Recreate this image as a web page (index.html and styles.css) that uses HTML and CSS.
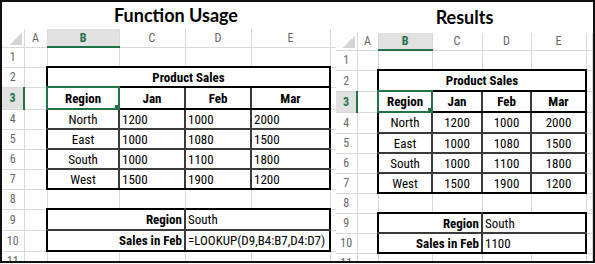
FILE: index.html
```html
<!DOCTYPE html>
<html lang="en">
<head>
    <meta charset="UTF-8">
    <title>LOOKUP Function Usage</title>
    <link rel="stylesheet" href="styles.css">
</head>
<body>
    <div class="frame">
        <section class="panel panel-left">
            <h1 class="title">Function Usage</h1>
            <table class="sheet sheet-left">
                <colgroup><col><col><col><col><col><col><col></colgroup>
                <tr class="col-heads">
                    <th class="corner"></th><th>A</th><th class="head-sel">B</th><th>C</th><th>D</th><th>E</th><th></th>
                </tr>
                <tr><th>1</th><td></td><td></td><td></td><td></td><td></td><td></td></tr>
                <tr><th>2</th><td></td><td class="t bt bb bl br b c" colspan="4">Product Sales</td><td></td></tr>
                <tr><th class="head-sel row">3</th><td></td><td class="t bl bb b c cell-sel">Region</td><td class="t bb b c">Jan</td><td class="t bb b c">Feb</td><td class="t bb br b c">Mar</td><td></td></tr>
                <tr><th>4</th><td></td><td class="t bl c">North</td><td class="t">1200</td><td class="t">1000</td><td class="t br">2000</td><td></td></tr>
                <tr><th>5</th><td></td><td class="t bl c">East</td><td class="t">1000</td><td class="t">1080</td><td class="t br">1500</td><td></td></tr>
                <tr><th>6</th><td></td><td class="t bl c">South</td><td class="t">1000</td><td class="t">1100</td><td class="t br">1800</td><td></td></tr>
                <tr><th>7</th><td></td><td class="t bl bb c">West</td><td class="t bb">1500</td><td class="t bb">1900</td><td class="t bb br">1200</td><td></td></tr>
                <tr><th>8</th><td></td><td></td><td></td><td></td><td></td><td></td></tr>
                <tr><th>9</th><td></td><td class="t bt bl b r" colspan="2">Region</td><td class="t bt br" colspan="2">South</td><td></td></tr>
                <tr><th>10</th><td></td><td class="t bb bl b r" colspan="2">Sales in Feb</td><td class="t bb br" colspan="2">=LOOKUP(D9,B4:B7,D4:D7)</td><td></td></tr>
                <tr><th>11</th><td></td><td></td><td></td><td></td><td></td><td></td></tr>
            </table>
        </section>

        <section class="panel panel-right">
            <h1 class="title">Results</h1>
            <table class="sheet sheet-right">
                <colgroup><col><col><col><col><col><col><col></colgroup>
                <tr class="col-heads">
                    <th class="corner"></th><th>A</th><th class="head-sel">B</th><th>C</th><th>D</th><th>E</th><th></th>
                </tr>
                <tr><th>1</th><td></td><td></td><td></td><td></td><td></td><td></td></tr>
                <tr><th>2</th><td></td><td class="t bt bb bl br b c" colspan="4">Product Sales</td><td></td></tr>
                <tr><th class="head-sel row">3</th><td></td><td class="t bl bb b c cell-sel">Region</td><td class="t bb b c">Jan</td><td class="t bb b c">Feb</td><td class="t bb br b c">Mar</td><td></td></tr>
                <tr><th>4</th><td></td><td class="t bl c">North</td><td class="t c">1200</td><td class="t c">1000</td><td class="t br c">2000</td><td></td></tr>
                <tr><th>5</th><td></td><td class="t bl c">East</td><td class="t c">1000</td><td class="t c">1080</td><td class="t br c">1500</td><td></td></tr>
                <tr><th>6</th><td></td><td class="t bl c">South</td><td class="t c">1000</td><td class="t c">1100</td><td class="t br c">1800</td><td></td></tr>
                <tr><th>7</th><td></td><td class="t bl bb c">West</td><td class="t bb c">1500</td><td class="t bb c">1900</td><td class="t bb br c">1200</td><td></td></tr>
                <tr><th>8</th><td></td><td></td><td></td><td></td><td></td><td></td></tr>
                <tr><th>9</th><td></td><td class="t bt bl b r" colspan="2">Region</td><td class="t bt br" colspan="2">South</td><td></td></tr>
                <tr><th>10</th><td></td><td class="t bb bl b r" colspan="2">Sales in Feb</td><td class="t bb br" colspan="2">1100</td><td></td></tr>
                <tr><th>11</th><td></td><td></td><td></td><td></td><td></td><td></td></tr>
            </table>
        </section>
    </div>
</body>
</html>
```

FILE: styles.css
```css
:root {
    --grid: #d9d9d9;
    --head-text: #666;
    --excel-green: #217346;
    --head-sel-bg: #e1e1e1;
}

* {
    margin: 0;
    padding: 0;
    box-sizing: border-box;
}

body {
    background: #fff;
    font-family: "Liberation Sans Narrow", "Roboto Condensed", "Liberation Sans", sans-serif;
}

.frame {
    width: 595px;
    height: 263px;
    border: 2px solid #111;
    display: flex;
    overflow: hidden;
}

.panel {
    overflow: hidden;
}

.panel-left {
    width: 334px;
    flex: none;
}

.panel-right {
    flex: 1;
}

.title {
    font-family: Lato, "Liberation Sans", sans-serif;
    font-size: 18px;
    font-weight: 700;
    text-align: center;
    color: #000;
}

.panel-left .title {
    height: 27px;
    line-height: 27px;
    padding-left: 14px;
}

.panel-right .title {
    height: 31px;
    line-height: 31px;
}

/* spreadsheet grid */
.sheet {
    border-collapse: collapse;
    table-layout: fixed;
    font-size: 13px;
    color: #000;
}

.sheet-left { width: 334px; }
.sheet-right { width: 256px; }

.sheet-left col:nth-child(1) { width: 22px; }
.sheet-left col:nth-child(2) { width: 23px; }
.sheet-left col:nth-child(3) { width: 72px; }
.sheet-left col:nth-child(4) { width: 66px; }
.sheet-left col:nth-child(5) { width: 66px; }
.sheet-left col:nth-child(6) { width: 79px; }
.sheet-left col:nth-child(7) { width: 6px; }

.sheet-right col:nth-child(1) { width: 21px; }
.sheet-right col:nth-child(2) { width: 21px; }
.sheet-right col:nth-child(3) { width: 54px; }
.sheet-right col:nth-child(4) { width: 50px; }
.sheet-right col:nth-child(5) { width: 49px; }
.sheet-right col:nth-child(6) { width: 55px; }
.sheet-right col:nth-child(7) { width: 6px; }

.sheet tr { height: 20px; }
.sheet-left tr:first-child { height: 18px; }
.sheet-left tr:nth-child(4) { height: 22px; }
.sheet-left tr:nth-child(10),
.sheet-left tr:nth-child(11) { height: 21px; }
.sheet-right tr:first-child { height: 17px; }
.sheet-right tr:nth-child(3),
.sheet-right tr:nth-child(4),
.sheet-right tr:nth-child(5) { height: 21px; }

.sheet td,
.sheet th {
    border: 1px solid var(--grid);
    padding: 0 2px;
    white-space: nowrap;
    overflow: hidden;
    vertical-align: middle;
    text-align: left;
}

.sheet th {
    font-weight: 400;
    font-size: 12px;
    color: var(--head-text);
    text-align: center;
    padding: 0;
}

.sheet tr > th:first-child {
    border-left: none;
}

.col-heads th {
    border-top: none;
}

.corner {
    background: linear-gradient(135deg, transparent 50%, #d4d4d4 50%) right 2px bottom 2px / 12px 12px no-repeat;
}

.head-sel {
    background: var(--head-sel-bg);
    color: var(--excel-green) !important;
    font-weight: 700 !important;
}

.col-heads .head-sel {
    border-bottom: 2px solid var(--excel-green);
}

.head-sel.row {
    border-right: 2px solid var(--excel-green);
}

/* table borders: inner lines dark grey, outer box black */
.t { border: 2px solid #3a3a3a !important; }
.bt { border-top-color: #000 !important; }
.bb { border-bottom-color: #000 !important; }
.bl { border-left-color: #000 !important; }
.br { border-right-color: #000 !important; }

.b { font-weight: 700; }
.sheet td.c { text-align: center; }
.sheet td.r { text-align: right; }

.cell-sel {
    position: relative;
    outline: 2px solid var(--excel-green);
    outline-offset: -1px;
}

.cell-sel::after {
    content: "";
    position: absolute;
    right: -3px;
    bottom: -3px;
    width: 5px;
    height: 5px;
    background: var(--excel-green);
    border: 1px solid #fff;
}
```
